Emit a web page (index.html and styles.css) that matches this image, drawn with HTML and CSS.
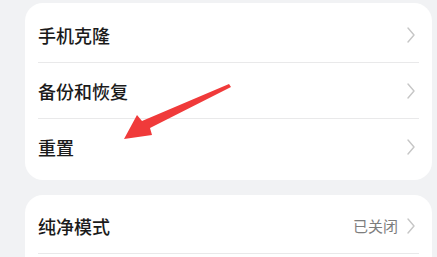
FILE: index.html
```html
<!DOCTYPE html>
<html lang="zh-CN">
<head>
  <meta charset="UTF-8">
  <meta name="viewport" content="width=device-width, initial-scale=1.0">
  <title>系统和更新</title>
  <link rel="stylesheet" href="styles.css">
</head>
<body>

  <div class="card">
    <div class="row">
      <span class="label">手机克隆</span>
      <svg class="chevron" width="8" height="16" viewBox="0 0 8 16"><path d="M1 1 L7 8 L1 15" /></svg>
    </div>
    <div class="row">
      <span class="label">备份和恢复</span>
      <svg class="chevron" width="8" height="16" viewBox="0 0 8 16"><path d="M1 1 L7 8 L1 15" /></svg>
    </div>
    <div class="row">
      <span class="label">重置</span>
      <svg class="chevron" width="8" height="16" viewBox="0 0 8 16"><path d="M1 1 L7 8 L1 15" /></svg>
    </div>
  </div>

  <div class="card card-second">
    <div class="row">
      <span class="label">纯净模式</span>
      <span class="value">已关闭</span>
      <svg class="chevron" width="8" height="16" viewBox="0 0 8 16"><path d="M1 1 L7 8 L1 15" /></svg>
    </div>
  </div>

  <!-- 标注箭头 -->
  <svg class="arrow" width="437" height="257" viewBox="0 0 437 257">
    <polygon points="229,84 231,87 150,128 152,135 124,139 137,115 142,121" fill="#f03a3a" />
  </svg>

</body>
</html>
```

FILE: styles.css
```css
* { margin: 0; padding: 0; box-sizing: border-box; }
html, body { height: 257px; overflow: hidden; }
body {
  font-family: "Noto Sans CJK SC", "Noto Sans", sans-serif;
  background: #f1f2f4;
  padding: 3px 5px 0 25px;
}
.card {
  background: #fff;
  border-radius: 18px;
  padding: 4px 0 5px;
}
.card-second {
  margin-top: 15px;
  padding: 3px 0 20px;
}
.row {
  display: flex;
  align-items: center;
  height: 56px;
  margin: 0 13px;
  border-bottom: 1px solid #e9e9ea;
}
.card .row:last-child { border-bottom: none; }
.card-second .row:last-child { border-bottom: 1px solid #e9e9ea; }
.label {
  flex: 1;
  font-size: 18px;
  font-weight: 500;
  color: #1b1b1b;
}
.value {
  font-size: 15px;
  color: #7d7d7d;
  margin-right: 9px;
}
.chevron {
  margin-right: 4px;
  fill: none;
  stroke: #c6c6c6;
  stroke-width: 1.4;
  stroke-linecap: round;
  stroke-linejoin: round;
}
.arrow {
  position: absolute;
  top: 0;
  left: 0;
  pointer-events: none;
}
```
